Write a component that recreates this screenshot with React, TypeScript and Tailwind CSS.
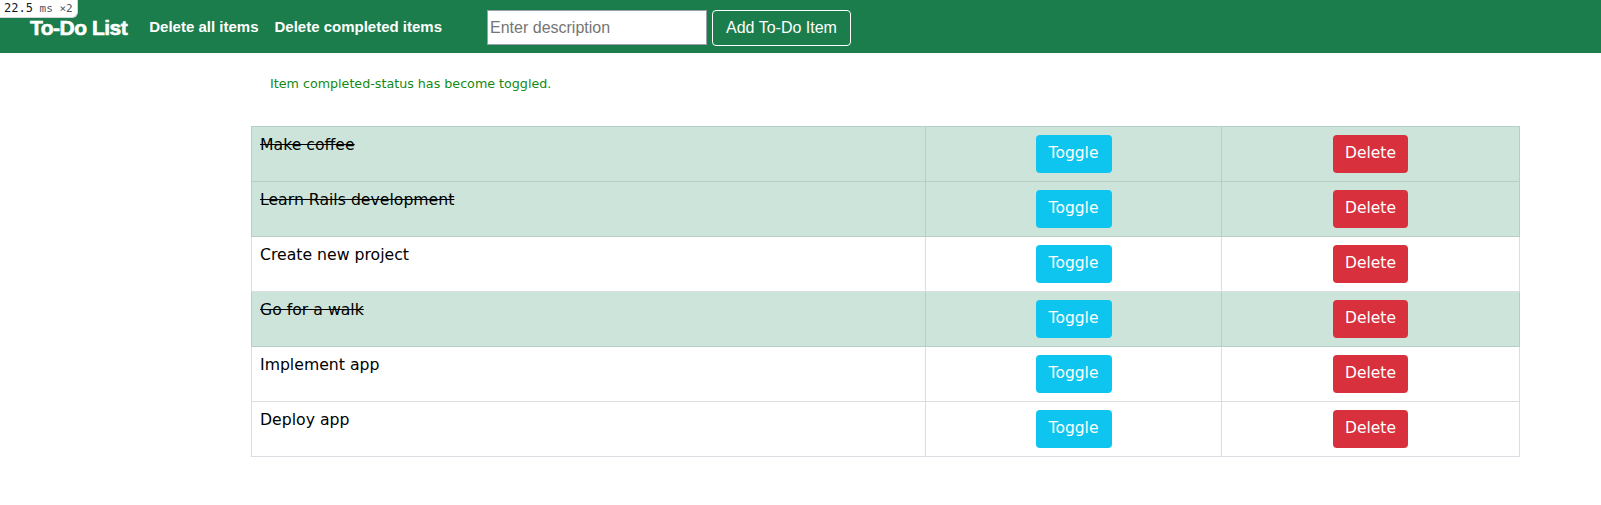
import React from "react";

type Item = { id: number; description: string; completed: boolean };

const items: Item[] = [
  { id: 1, description: "Make coffee", completed: true },
  { id: 2, description: "Learn Rails development", completed: true },
  { id: 3, description: "Create new project", completed: false },
  { id: 4, description: "Go for a walk", completed: true },
  { id: 5, description: "Implement app", completed: false },
  { id: 6, description: "Deploy app", completed: false },
];

export default function App() {
  return (
    <div className="relative min-h-[505px] bg-white font-['DejaVu_Sans',sans-serif]">
      <div className="absolute left-0 top-0 z-10 rounded-br-md border-b border-r border-gray-300 bg-white px-1 text-[12px] leading-[17px] text-gray-900 font-['DejaVu_Sans_Mono',monospace]">
        22.5<span className="text-[11px] text-gray-600"> ms ×2</span>
      </div>

      <nav className="flex h-[53px] items-center bg-[#1a7d4b] pt-[2px] font-['Liberation_Sans',Arial,sans-serif] text-white">
        <span className="ml-[30px] text-[21px] font-bold tracking-[-0.5px] [-webkit-text-stroke:0.6px_white]">
          To-Do List
        </span>
        <a className="ml-[22px] text-[15px] font-bold">Delete all items</a>
        <a className="ml-[16px] text-[15px] font-bold">Delete completed items</a>
        <input
          className="ml-[45px] h-[35px] w-[220px] border border-gray-400 bg-white px-[2px] text-[16px] text-black placeholder:text-[#757575] outline-none"
          placeholder="Enter description"
        />
        <button className="ml-[5px] h-[36px] rounded border border-white px-[13px] text-[16px] text-white">
          Add To-Do Item
        </button>
      </nav>

      <p className="ml-[270px] mt-[22px] text-[12.7px] leading-[18px] text-[#138a13]">
        Item completed-status has become toggled.
      </p>

      <table className="ml-[251px] mt-[33px] w-[1269px] border-collapse text-[15.7px] text-black">
        <tbody>
          {items.map((item) => (
            <tr
              key={item.id}
              className={item.completed ? "bg-[#cde4da]" : "bg-white"}
            >
              <td
                className={`h-[54px] w-[674px] border px-2 pt-[6px] align-top ${
                  item.completed ? "border-[#b6cfc4] line-through" : "border-[#dadde1]"
                }`}
              >
                {item.description}
              </td>
              <td
                className={`w-[296px] border py-2 text-center align-top ${
                  item.completed ? "border-[#b6cfc4]" : "border-[#dadde1]"
                }`}
              >
                <button className="h-[38px] w-[76px] rounded bg-[#0dc5ee] text-[15.5px] text-white">
                  Toggle
                </button>
              </td>
              <td
                className={`border py-2 text-center align-top ${
                  item.completed ? "border-[#b6cfc4]" : "border-[#dadde1]"
                }`}
              >
                <button className="h-[38px] w-[75px] rounded bg-[#d9303e] text-[15.5px] text-white">
                  Delete
                </button>
              </td>
            </tr>
          ))}
        </tbody>
      </table>
    </div>
  );
}
